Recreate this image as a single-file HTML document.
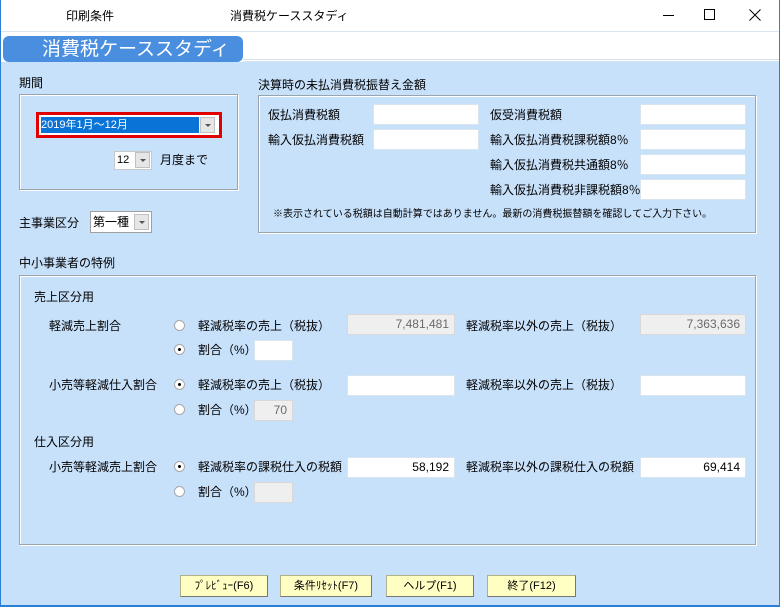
<!DOCTYPE html>
<html><head><meta charset="utf-8"><style>
*{margin:0;padding:0;box-sizing:border-box}
body{width:780px;height:607px;position:relative;overflow:hidden;background:#c8e1fb;font-family:"Liberation Sans","Noto Sans CJK JP",sans-serif;font-size:12px;color:#000}
.a{position:absolute;white-space:nowrap}
.t{position:absolute;white-space:nowrap;line-height:14px}
.box{position:absolute;border:1px solid #9aa4ae;box-shadow:inset 1px 1px 0 #fff,1px 1px 0 #fff}
.in{position:absolute;background:#fff;border:1px solid #d8e4ee;height:21px;text-align:right;padding-right:5px;line-height:19px;font-size:12px}
.g{background:#efefef;color:#6a6a6a;border-color:#d8d8d8}
.r{position:absolute;width:11px;height:11px;border-radius:50%;background:#fff;border:1px solid #a8a8a8}
.r.on::after{content:"";position:absolute;left:3px;top:3px;width:3px;height:3px;border-radius:50%;background:#000}
.btn{position:absolute;top:575px;height:22px;background:#ffffc4;border:1px solid #b0b08a;border-right-color:#777;border-bottom-color:#777;text-align:center;line-height:20px;font-size:11px}
.dd{position:absolute;width:15px;height:16px;background:#e6e6e6;border:1px solid #c0c0c0}
.dd::after{content:"";position:absolute;left:4px;top:6px;border-left:3px solid transparent;border-right:3px solid transparent;border-top:3px solid #555}
</style></head><body>
<div class="a" style="left:0;top:0;width:780px;height:62px;background:#fff"></div>
<div class="a" style="left:0;top:31px;width:780px;height:1px;background:#dbe6f0"></div>
<div class="a" style="left:243px;top:59px;width:537px;height:3px;border-top:1px solid #d6e2ee;border-bottom:1px solid #d6e2ee"></div>
<div class="t" style="left:66px;top:9px">印刷条件</div>
<div class="t" style="left:230px;top:9px">消費税ケーススタディ</div>
<div class="a" style="left:663px;top:15px;width:11px;height:1px;background:#000"></div>
<div class="a" style="left:704px;top:9px;width:11px;height:11px;border:1px solid #000"></div>
<svg class="a" style="left:749px;top:9px" width="12" height="12"><path d="M0.5 0.5L11.5 11.5M11.5 0.5L0.5 11.5" stroke="#000" stroke-width="1"/></svg>
<div class="a" style="left:3px;top:36px;width:240px;height:26px;background:#4a8ee0;border-radius:6px"></div>
<div class="t" style="left:42px;top:40px;color:#fff;font-size:19px;line-height:20px">消費税ケーススタディ</div>
<div class="a" style="left:0;top:0;width:1px;height:607px;background:#2b7fd4"></div>
<div class="a" style="left:779px;top:0;width:1px;height:607px;background:#2b7fd4"></div>
<div class="a" style="left:0;top:605px;width:780px;height:2px;background:#2b7fd4"></div>

<div class="t" style="left:19px;top:76px">期間</div>
<div class="box" style="left:19px;top:94px;width:219px;height:96px"></div>
<div class="a" style="left:36px;top:112px;width:186px;height:26px;border:3px solid #e00000;background:#fff"></div>
<div class="a" style="left:41px;top:117px;width:158px;height:16px;background:#0a74d6;color:#fff;font-size:11px;line-height:16px">2019年1月～12月</div>
<div class="dd" style="left:200px;top:117px"></div>
<div class="a" style="left:114px;top:151px;width:38px;height:19px;background:#fff;border:1px solid #c8c8c8;font-size:11px;line-height:17px;padding-left:2px">12</div>
<div class="dd" style="left:135px;top:152px"></div>
<div class="t" style="left:160px;top:153px">月度まで</div>

<div class="t" style="left:258px;top:78px">決算時の未払消費税振替え金額</div>
<div class="box" style="left:258px;top:95px;width:498px;height:138px"></div>
<div class="t" style="left:268px;top:108px">仮払消費税額</div>
<div class="in" style="left:373px;top:104px;width:106px"></div>
<div class="t" style="left:268px;top:133px">輸入仮払消費税額</div>
<div class="in" style="left:373px;top:129px;width:106px"></div>
<div class="t" style="left:490px;top:108px">仮受消費税額</div>
<div class="in" style="left:640px;top:104px;width:106px"></div>
<div class="t" style="left:490px;top:133px">輸入仮払消費税課税額8％</div>
<div class="in" style="left:640px;top:129px;width:106px"></div>
<div class="t" style="left:490px;top:158px">輸入仮払消費税共通額8％</div>
<div class="in" style="left:640px;top:154px;width:106px"></div>
<div class="t" style="left:490px;top:183px">輸入仮払消費税非課税額8％</div>
<div class="in" style="left:640px;top:179px;width:106px"></div>
<div class="t" style="left:273px;top:208px;font-size:10px">※表示されている税額は自動計算ではありません。最新の消費税振替額を確認してご入力下さい。</div>

<div class="t" style="left:19px;top:216px">主事業区分</div>
<div class="a" style="left:90px;top:211px;width:62px;height:22px;background:#fff;border:1px solid #a0a0a0;line-height:20px;padding-left:2px">第一種</div>
<div class="dd" style="left:134px;top:214px"></div>

<div class="t" style="left:19px;top:256px">中小事業者の特例</div>
<div class="box" style="left:19px;top:275px;width:737px;height:270px"></div>
<div class="t" style="left:34px;top:290px">売上区分用</div>
<div class="t" style="left:49px;top:319px">軽減売上割合</div>
<div class="r" style="left:174px;top:320px"></div>
<div class="t" style="left:198px;top:319px">軽減税率の売上（税抜）</div>
<div class="in g" style="left:347px;top:314px;width:108px">7,481,481</div>
<div class="t" style="left:466px;top:319px">軽減税率以外の売上（税抜）</div>
<div class="in g" style="left:640px;top:314px;width:106px">7,363,636</div>
<div class="r on" style="left:174px;top:344px"></div>
<div class="t" style="left:198px;top:343px">割合（%）</div>
<div class="in" style="left:254px;top:340px;width:39px"></div>

<div class="t" style="left:49px;top:378px">小売等軽減仕入割合</div>
<div class="r on" style="left:174px;top:379px"></div>
<div class="t" style="left:198px;top:378px">軽減税率の売上（税抜）</div>
<div class="in" style="left:347px;top:375px;width:108px"></div>
<div class="t" style="left:466px;top:378px">軽減税率以外の売上（税抜）</div>
<div class="in" style="left:640px;top:375px;width:106px"></div>
<div class="r" style="left:174px;top:404px"></div>
<div class="t" style="left:198px;top:403px">割合（%）</div>
<div class="in g" style="left:254px;top:400px;width:39px">70</div>

<div class="t" style="left:34px;top:435px">仕入区分用</div>
<div class="t" style="left:49px;top:460px">小売等軽減売上割合</div>
<div class="r on" style="left:174px;top:461px"></div>
<div class="t" style="left:198px;top:460px">軽減税率の課税仕入の税額</div>
<div class="in" style="left:347px;top:457px;width:108px">58,192</div>
<div class="t" style="left:466px;top:460px">軽減税率以外の課税仕入の税額</div>
<div class="in" style="left:640px;top:457px;width:106px">69,414</div>
<div class="r" style="left:174px;top:486px"></div>
<div class="t" style="left:198px;top:485px">割合（%）</div>
<div class="in g" style="left:254px;top:482px;width:39px"></div>

<div class="btn" style="left:180px;width:88px">ﾌﾟﾚﾋﾞｭｰ(F6)</div>
<div class="btn" style="left:280px;width:92px">条件ﾘｾｯﾄ(F7)</div>
<div class="btn" style="left:386px;width:88px">ヘルプ(F1)</div>
<div class="btn" style="left:487px;width:89px">終了(F12)</div>
</body></html>
